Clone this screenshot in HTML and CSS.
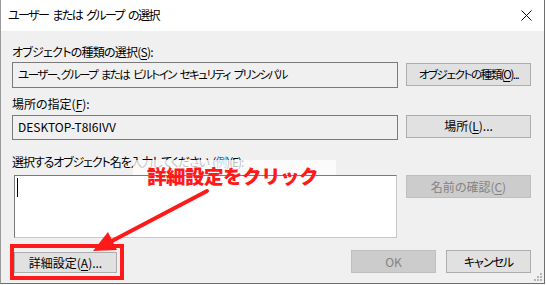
FILE: index.html
```html
<!DOCTYPE html>
<html lang="ja">
<head>
    <meta charset="UTF-8">
    <title>ユーザー または グループ の選択</title>
    <link rel="stylesheet" href="styles.css">
</head>
<body>
    <div class="window">
        <div class="titlebar">
            <span class="title">ユーザー または グループ の選択</span>
            <svg class="close" width="11" height="11" viewBox="0 0 11 11">
                <path d="M0.5 0.5 L10.5 10.5 M10.5 0.5 L0.5 10.5" stroke="#111" stroke-width="1"/>
            </svg>
        </div>

        <div class="content">
            <div class="label first">オブジェクトの種類の選択(<u>S</u>):</div>
            <div class="field tall kana">ユーザー、グループ または ビルトイン セキュリティ プリンシパル</div>
            <button class="btn side kana-btn">オブジェクトの種類(<u>O</u>)...</button>

            <div class="label second">場所の指定(<u>F</u>):</div>
            <div class="field">DESKTOP-T8I6IVV</div>
            <button class="btn side">場所(<u>L</u>)...</button>

            <div class="label third">選択するオブジェクト名を入力してください (<span class="link">例</span>)(<u>E</u>):</div>
            <div class="textbox"><span class="caret"></span></div>
            <button class="btn side top disabled">名前の確認(<u>C</u>)</button>

            <div class="bottom">
                <button class="btn advanced">詳細設定(<u>A</u>)...</button>
                <div class="actions">
                    <button class="btn small disabled">OK</button>
                    <button class="btn small cancel">キャンセル</button>
                </div>
            </div>
        </div>

        <!-- annotation layered over the dialog -->
        <div class="note-bg"></div>
        <div class="note">詳細設定をクリック</div>
        <div class="highlight"></div>
        <svg class="arrow" width="546" height="285" viewBox="0 0 546 285">
            <line x1="207" y1="191" x2="110" y2="242" stroke="#ff1a1a" stroke-width="4" stroke-linecap="round"/>
            <polygon points="93,251 117,250 108,232" fill="#ff1a1a"/>
        </svg>
        <svg class="grip" width="8" height="8" viewBox="0 0 8 8">
            <rect x="6" y="0" width="2" height="2" fill="#b5b5b5"/>
            <rect x="3" y="3" width="2" height="2" fill="#b5b5b5"/>
            <rect x="6" y="3" width="2" height="2" fill="#b5b5b5"/>
            <rect x="0" y="6" width="2" height="2" fill="#b5b5b5"/>
            <rect x="3" y="6" width="2" height="2" fill="#b5b5b5"/>
            <rect x="6" y="6" width="2" height="2" fill="#b5b5b5"/>
        </svg>
    </div>
</body>
</html>
```

FILE: styles.css
```css
body {
    margin: 0;
    background: #ffffff;
    font-family: "Noto Sans CJK JP", "Noto Sans", sans-serif;
    font-size: 12px;
    color: #000;
    font-feature-settings: "palt";
}

.window {
    position: relative;
    width: 545px;
    height: 284px;
    box-sizing: border-box;
    background: #f0f0f0;
    border-left: 1px solid #9a9a9a;
    border-right: 1px solid #6e6e6e;
    border-bottom: 1px solid #6e6e6e;
    overflow: hidden;
}

/* --- title bar --- */
.titlebar {
    height: 31px;
    background: #ffffff;
    display: flex;
    align-items: center;
    justify-content: space-between;
    padding: 0 12px 0 7px;
    box-sizing: border-box;
}
.title {
    font-size: 12px;
    line-height: 16px;
    letter-spacing: -1.6px;
    word-spacing: 3px;
    margin-top: -1px;
}
.close {
    margin-top: -1px;
}

/* --- dialog body --- */
.content {
    display: grid;
    grid-template-columns: 386px 125px;
    column-gap: 8px;
    padding: 13px 13px 0 11px;
}
.label {
    grid-column: 1 / 3;
    line-height: 16px;
    white-space: nowrap;
}
.first {
    letter-spacing: -0.75px;
}
.second {
    margin-top: 8px;
}
.third {
    margin-top: 14px;
    letter-spacing: -1.1px;
    word-spacing: 2px;
}
.link {
    color: #1a6fc9;
}
u {
    text-decoration-thickness: 1px;
    text-underline-offset: 2px;
}

.field {
    margin-top: 3px;
    height: 25px;
    box-sizing: border-box;
    border: 1px solid #7a7a7a;
    background: #f0f0f0;
    padding: 0 5px;
    line-height: 22px;
    white-space: nowrap;
    overflow: hidden;
}
.field.tall {
    margin-top: 2px;
    height: 26px;
    line-height: 23px;
}
.kana {
    font-size: 11.5px;
    letter-spacing: -1.5px;
    word-spacing: 2.5px;
}

.textbox {
    margin: 5px 1px 0 2px;
    height: 63px;
    box-sizing: border-box;
    background: #ffffff;
    border: 1px solid #7a7a7a;
    border-right-color: #c8c8c8;
    border-bottom-color: #c8c8c8;
    padding: 2px 2px;
}
.caret {
    display: block;
    width: 1px;
    height: 19px;
    background: #000;
}

/* --- buttons --- */
.btn {
    font: inherit;
    font-feature-settings: "palt";
    height: 23px;
    padding: 0;
    box-sizing: border-box;
    background: #e1e1e1;
    border: 1px solid #adadad;
    color: #000;
    line-height: 20px;
    white-space: nowrap;
}
.btn.side {
    align-self: center;
}
.btn.top {
    align-self: start;
    margin-top: 5px;
}
.btn.disabled {
    background: #cccccc;
    border-color: #bfbfbf;
    color: #838383;
}
.kana-btn {
    font-size: 11.5px;
    letter-spacing: -1.4px;
}
.cancel {
    letter-spacing: -1px;
}

.bottom {
    grid-column: 1 / 3;
    margin-top: 12px;
    display: flex;
    justify-content: space-between;
    align-items: flex-end;
}
.advanced {
    width: 103px;
    height: 21px;
    margin-left: 2px;
    line-height: 18px;
}
.actions {
    display: flex;
    gap: 10px;
}
.btn.small {
    width: 85px;
}

/* --- annotation overlay --- */
.note-bg {
    position: absolute;
    left: 132px;
    top: 160px;
    width: 203px;
    height: 15px;
    background: rgba(255, 255, 255, 0.75);
}
.note {
    position: absolute;
    left: 146px;
    top: 161px;
    font-size: 19.5px;
    line-height: 30px;
    font-weight: 900;
    letter-spacing: -0.5px;
    color: #ff1a1a;
    font-feature-settings: normal;
}
.highlight {
    position: absolute;
    left: 9px;
    top: 244px;
    width: 114px;
    height: 36px;
    box-sizing: border-box;
    border: 4px solid #ff1a1a;
}
.arrow {
    position: absolute;
    left: -1px;
    top: 0;
    pointer-events: none;
}
.grip {
    position: absolute;
    right: 2px;
    bottom: 2px;
}
```
